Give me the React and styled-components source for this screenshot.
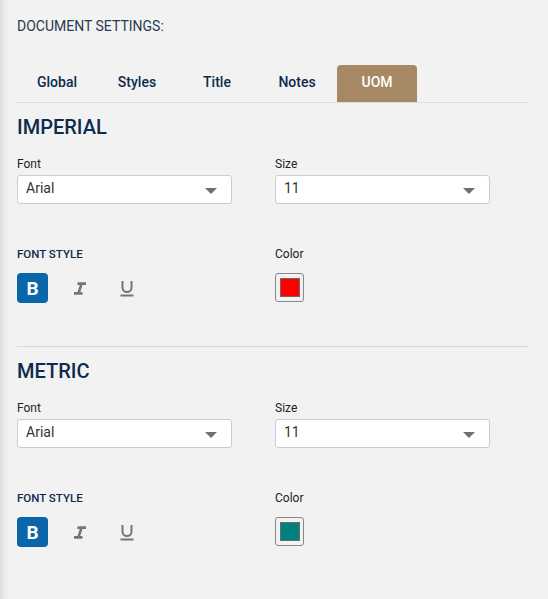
import React from 'react'
import styled, { createGlobalStyle } from 'styled-components'

const GlobalStyle = createGlobalStyle`
    html, body {
        margin: 0;
        padding: 0;
        background: #f2f2f2;
    }
    body {
        font-family: Roboto, "Liberation Sans", Arial, sans-serif;
    }
`

const tabs = [ 'Global', 'Styles', 'Title', 'Notes', 'UOM' ]

function Select( { value } ) {
    return (
        <SelectBox>
            <span>{ value }</span>
            <Caret />
        </SelectBox>
    )
}

function UnitSection( { title, color, first } ) {
    return (
        <Section first={ first }>
            <SectionTitle>{ title }</SectionTitle>
            <Grid>
                <Field>
                    <Label>Font</Label>
                    <Select value="Arial" />
                </Field>
                <Field>
                    <Label>Size</Label>
                    <Select value="11" />
                </Field>
                <Field>
                    <SmallCaps spaced>FONT STYLE</SmallCaps>
                    <StyleButtons>
                        <StyleButton active>B</StyleButton>
                        <StyleButton>
                            <svg width="14" height="13" viewBox="0 0 14 13">
                                <path d="M4.5 1.6h8.5M1 11.4h8.5M8.6 1.6l-3.2 9.8" stroke="#757575" strokeWidth="2.6" fill="none" />
                            </svg>
                        </StyleButton>
                        <StyleButton>
                            <svg width="14" height="17" viewBox="0 0 14 17">
                                <path d="M2.5 1v6.5a4.5 4.5 0 0 0 9 0V1" stroke="#757575" strokeWidth="2" fill="none" />
                                <rect x="0.5" y="14.5" width="13" height="2" fill="#757575" />
                            </svg>
                        </StyleButton>
                    </StyleButtons>
                </Field>
                <Field>
                    <Label spaced>Color</Label>
                    <Swatch>
                        <SwatchFill color={ color } />
                    </Swatch>
                </Field>
            </Grid>
        </Section>
    )
}

function App() {
    return (
        <Page>
            <GlobalStyle />
            <Heading>DOCUMENT SETTINGS:</Heading>
            <TabBar>
                { tabs.map( t => (
                    <Tab key={ t } active={ t === 'UOM' }>{ t }</Tab>
                ) ) }
            </TabBar>
            <UnitSection title="IMPERIAL" color="#ff0000" first />
            <UnitSection title="METRIC" color="#008080" />
        </Page>
    )
}

export default App

const Page = styled.div `
    min-height: 599px;
    box-sizing: border-box;
    padding: 17px 19px 0 17px;
    background: linear-gradient(to right, #dcdcdc 0px, #ebebeb 4px, #f2f2f2 9px);
`
const Heading = styled.div `
    font-size: 14px;
    color: #2a3a50;
    line-height: 18px;
`
const TabBar = styled.div `
    display: flex;
    margin-top: 30px;
    border-bottom: 1px solid #dcdcdc;
`
const Tab = styled.div `
    width: 80px;
    height: 37px;
    box-sizing: border-box;
    padding-bottom: 3px;
    display: flex;
    align-items: center;
    justify-content: center;
    font-size: 14px;
    font-weight: 500;
    border-radius: 4px 4px 0 0;
    color: ${ props => props.active ? '#ffffff' : '#0d2b4e' };
    background: ${ props => props.active ? '#a68864' : 'transparent' };
`
const Section = styled.div `
    padding-top: 12px;
    margin-top: ${ props => props.first ? '0' : '43px' };
    border-top: ${ props => props.first ? 'none' : '1px solid #d8d8d8' };
`
const SectionTitle = styled.div `
    font-size: 20px;
    font-weight: 500;
    color: #0d2b4e;
    line-height: 24px;
`
const Grid = styled.div `
    display: grid;
    grid-template-columns: 215px 215px;
    column-gap: 43px;
    row-gap: 43px;
    margin-top: 18px;
`
const Field = styled.div `
    display: flex;
    flex-direction: column;
`
const Label = styled.div `
    font-size: 12px;
    color: #222;
    line-height: 14px;
    margin-bottom: ${ props => props.spaced ? '11px' : '4px' };
`
const SmallCaps = styled(Label) `
    font-weight: 500;
    font-size: 11.5px;
    color: #0d2b4e;
`
const SelectBox = styled.div `
    height: 29px;
    box-sizing: border-box;
    border: 1px solid #cccccc;
    border-radius: 3px;
    background: #ffffff;
    display: flex;
    align-items: center;
    justify-content: space-between;
    padding: 0 14px 0 8px;
    font-size: 14px;
    color: #333;
    span {
        margin-top: -3px;
    }
`
const Caret = styled.div `
    width: 0;
    height: 0;
    border-left: 6px solid transparent;
    border-right: 6px solid transparent;
    border-top: 6px solid #707070;
    margin-top: 2px;
`
const StyleButtons = styled.div `
    display: flex;
    gap: 16px;
    margin-top: 1px;
`
const StyleButton = styled.div `
    width: 31px;
    height: 30px;
    border-radius: 4px;
    display: flex;
    align-items: center;
    justify-content: center;
    font-size: 19px;
    font-weight: 700;
    background: ${ props => props.active ? '#0a66a8' : 'transparent' };
    color: ${ props => props.active ? '#ffffff' : '#757575' };
`
const Swatch = styled.div `
    width: 29px;
    height: 29px;
    box-sizing: border-box;
    border: 1px solid #888;
    border-radius: 3px;
    display: flex;
    align-items: center;
    justify-content: center;
    margin-top: 1px;
`
const SwatchFill = styled.div `
    width: 20px;
    height: 19px;
    box-sizing: border-box;
    border: 1px solid #6b6b6b;
    background: ${ props => props.color };
`
